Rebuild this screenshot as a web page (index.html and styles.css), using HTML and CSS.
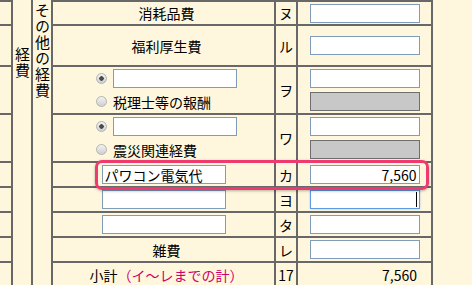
FILE: index.html
```html
<!DOCTYPE html>
<html lang="ja">
<head>
  <meta charset="UTF-8">
  <meta name="viewport" content="width=device-width, initial-scale=1">
  <title>その他の経費 - 内訳</title>
  <link rel="stylesheet" href="styles.css">
</head>
<body>
  <div class="sheet">
    <div class="vlabel keihi"><span>経費</span></div>
    <div class="vlabel sonota"><span>その他の経費</span></div>

    <!-- ヌ -->
    <div class="edge top"></div>
    <div class="item top">消耗品費</div>
    <div class="kana top">ヌ</div>
    <div class="amount top"><input class="num" type="text"></div>

    <!-- ル -->
    <div class="edge"></div>
    <div class="item">福利厚生費</div>
    <div class="kana">ル</div>
    <div class="amount"><input class="num" type="text"></div>

    <!-- ヲ -->
    <div class="edge"></div>
    <div class="item">
      <div class="choice">
        <label class="opt"><input type="radio" name="wo" checked><input class="txt" type="text"></label>
        <label class="opt"><input type="radio" name="wo">税理士等の報酬</label>
      </div>
    </div>
    <div class="kana">ヲ</div>
    <div class="amount stack">
      <input class="num" type="text">
      <input class="num locked" type="text" disabled>
    </div>

    <!-- ワ -->
    <div class="edge"></div>
    <div class="item">
      <div class="choice">
        <label class="opt"><input type="radio" name="wa" checked><input class="txt" type="text"></label>
        <label class="opt"><input type="radio" name="wa">震災関連経費</label>
      </div>
    </div>
    <div class="kana">ワ</div>
    <div class="amount stack">
      <input class="num" type="text">
      <input class="num locked" type="text" disabled>
    </div>

    <!-- カ -->
    <div class="edge"></div>
    <div class="item"><input class="txt" type="text" value="パワコン電気代"></div>
    <div class="kana">カ</div>
    <div class="amount"><input class="num" type="text" value="7,560"></div>

    <!-- ヨ -->
    <div class="edge"></div>
    <div class="item"><input class="txt" type="text"></div>
    <div class="kana">ヨ</div>
    <div class="amount"><input class="num active" type="text"></div>

    <!-- タ -->
    <div class="edge"></div>
    <div class="item"><input class="txt" type="text"></div>
    <div class="kana">タ</div>
    <div class="amount"><input class="num" type="text"></div>

    <!-- レ -->
    <div class="edge"></div>
    <div class="item">雑費</div>
    <div class="kana">レ</div>
    <div class="amount"><input class="num" type="text"></div>

    <!-- 小計 -->
    <div class="edge"></div>
    <div class="item">小計<span class="note">（イ～レまでの計）</span></div>
    <div class="kana">17</div>
    <div class="amount total">7,560</div>

    <div class="highlight"></div>
    <div class="caret"></div>
  </div>
</body>
</html>
```

FILE: styles.css
```css
body {
  margin: 0;
  background: #fff7dd;
  color: #000;
  font-family: "Noto Sans CJK JP", "Noto Sans", sans-serif;
  font-size: 14px;
}
.sheet {
  position: relative;
  width: 433px;
  display: grid;
  grid-template-columns: 13px 20px 20px 223px 22px 135px;
  grid-template-rows: 26px 41px 48px 48px 25px 25px 25px 25px 25px;
}
.sheet > div {
  box-sizing: border-box;
  border-right: 2px solid #686868;
  border-bottom: 2px solid #686868;
  display: flex;
  align-items: center;
  justify-content: center;
  line-height: 16px;
}
.sheet > .top { border-top: 2px solid #686868; }

.vlabel {
  grid-row: 1 / span 9;
  align-items: flex-start !important;
  font-size: 15px;
  border-bottom: none !important;
}
.vlabel span {
  writing-mode: vertical-rl;
  line-height: 16px;
  letter-spacing: 1px;
}
.keihi { grid-column: 2; padding-top: 47px; }
.sonota { grid-column: 3; padding-top: 3px; }

.item { padding-left: 6px; }
.item .note { color: #d0006a; }
.choice {
  display: flex;
  flex-direction: column;
  gap: 4px;
}
.opt {
  display: flex;
  align-items: center;
  gap: 6px;
  height: 19px;
}
.opt input[type="radio"] {
  appearance: none;
  margin: 0;
  width: 11px;
  height: 11px;
  border-radius: 50%;
  border: 1px solid #b4b4b4;
  background: linear-gradient(#f2f2f2, #cfcfcf);
  box-sizing: border-box;
}
.opt input[type="radio"]:checked {
  background: radial-gradient(circle, #4a4a4a 0 2px, transparent 2.5px), linear-gradient(#f2f2f2, #cfcfcf);
}

input.txt, input.num {
  box-sizing: border-box;
  height: 19px;
  margin: 0;
  padding: 0 2px;
  border: 1px solid #7f9db9;
  background: #fff;
  font-family: inherit;
  font-size: 14px;
  color: #000;
  outline: none;
}
input.txt { width: 124px; }
.item input.txt { margin-left: -6px; }
.opt input.txt { margin-left: 0; }
input.num { width: 110px; text-align: right; }
input.num.locked {
  background: #c8c8c8;
  border-color: #6e6e6e;
}
input.num.active {
  border-color: #5d9be4;
  box-shadow: 0 0 2px #a8c8f0;
}

.amount.stack {
  flex-direction: column;
  gap: 4px;
}
.amount.total {
  justify-content: flex-end;
  padding-right: 14px;
}

.sheet > .highlight {
  position: absolute;
  left: 95px;
  top: 160px;
  width: 334px;
  height: 30px;
  border: 3px solid #ee3a6e;
  border-radius: 7px;
  box-shadow: 0 1px 3px rgba(0,0,0,0.3);
}
.sheet > .caret {
  position: absolute;
  left: 416px;
  top: 192px;
  width: 1px;
  height: 15px;
  border: none;
  background: #000;
}
```
